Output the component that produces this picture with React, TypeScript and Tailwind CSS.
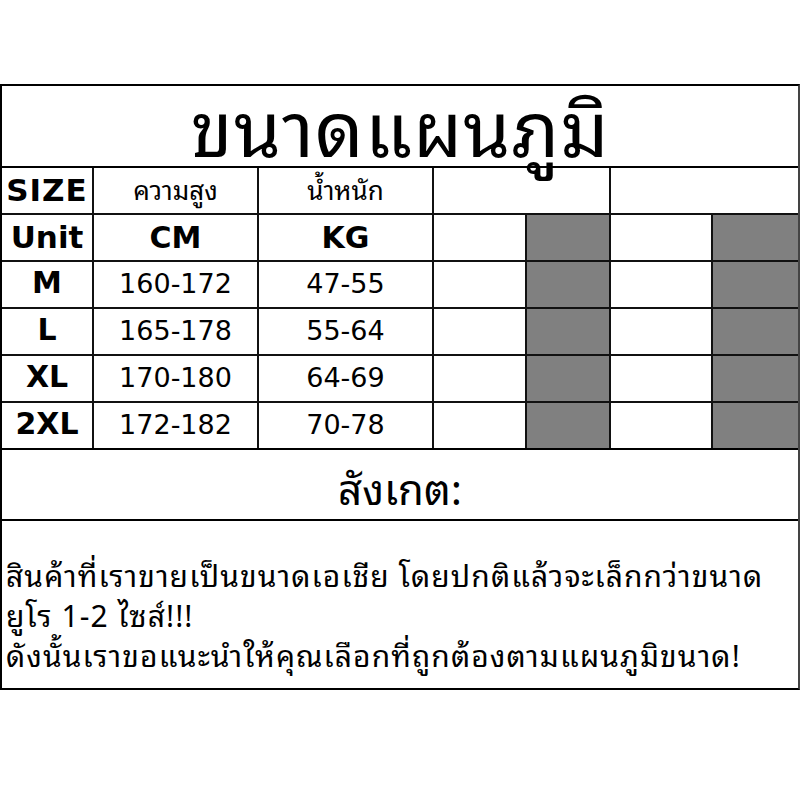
const thai = { fontFamily: 'Tahoma, "Noto Sans Thai Looped", Garuda, Loma, "Tlwg Typo", "Noto Sans Thai", "Noto Sans", sans-serif' };
const bold = { fontFamily: '"DejaVu Sans", Verdana, sans-serif' };

const rows = [
  ["M", "160-172", "47-55"],
  ["L", "165-178", "55-64"],
  ["XL", "170-180", "64-69"],
  ["2XL", "172-182", "70-78"],
];

function Cell({ children, className = "bg-white" }: { children?: React.ReactNode; className?: string }) {
  return <div className={`flex items-center justify-center ${className}`}>{children}</div>;
}

export default function App() {
  return (
    <div className="h-[800px] w-[800px] bg-white pt-[84px]">
      <div className="w-[800px] border-2 border-black border-r-[#444] bg-white text-black">
        {/* Title */}
        <div className="relative z-10 flex h-[82px] items-start justify-center border-b-2 border-black">
          <h1 className="mt-[2px] text-[76px] leading-[70px] tracking-[1px]" style={thai}>ขนาดแผนภูมิ</h1>
        </div>

        {/* Size table */}
        <div className="grid grid-cols-[90px_163px_173px_91px_82px_100px_85px] auto-rows-[45px] gap-[2px] bg-[#111]">
          <Cell className="bg-white text-[31px] font-bold"><span className="tracking-[1px]" style={bold}>SIZE</span></Cell>
          <Cell className="bg-white text-[26px]"><span className="-mt-[4px]" style={thai}>ความสูง</span></Cell>
          <Cell className="bg-white text-[26px]"><span className="-mt-[4px]" style={thai}>น้ำหนัก</span></Cell>
          <Cell className="col-span-2 bg-white" />
          <Cell className="col-span-2 bg-white" />

          <Cell className="bg-white text-[31px] font-bold"><span style={bold}>Unit</span></Cell>
          <Cell className="bg-white text-[30px] font-bold"><span style={bold}>CM</span></Cell>
          <Cell className="bg-white text-[30px] font-bold"><span style={bold}>KG</span></Cell>
          <Cell />
          <Cell className="bg-[#808080]" />
          <Cell />
          <Cell className="bg-[#808080]" />

          {rows.map(([size, cm, kg]) => (
            <div key={size} className="contents">
              <Cell className="bg-white text-[30px] font-bold"><span className="-mt-[4px]" style={bold}>{size}</span></Cell>
              <Cell className="bg-white text-[27px]"><span style={bold}>{cm}</span></Cell>
              <Cell className="bg-white text-[27px]"><span style={bold}>{kg}</span></Cell>
              <Cell />
              <Cell className="bg-[#808080]" />
              <Cell />
              <Cell className="bg-[#808080]" />
            </div>
          ))}
        </div>

        {/* Note heading */}
        <div className="flex h-[73px] items-center justify-center border-t-2 border-b-2 border-black">
          <span className="mt-[2px] text-[42px] leading-none" style={thai}>สังเกต:</span>
        </div>

        {/* Note body */}
        <div className="h-[167px] px-[4px] pt-[33px] text-[30px] leading-[40px] tracking-[1.1px]" style={thai}>
          <p>สินค้าที่เราขายเป็นขนาดเอเชีย โดยปกติแล้วจะเล็กกว่าขนาด</p>
          <p>ยูโร 1-2 ไซส์!!!</p>
          <p>ดังนั้นเราขอแนะนำให้คุณเลือกที่ถูกต้องตามแผนภูมิขนาด!</p>
        </div>
      </div>
    </div>
  );
}
